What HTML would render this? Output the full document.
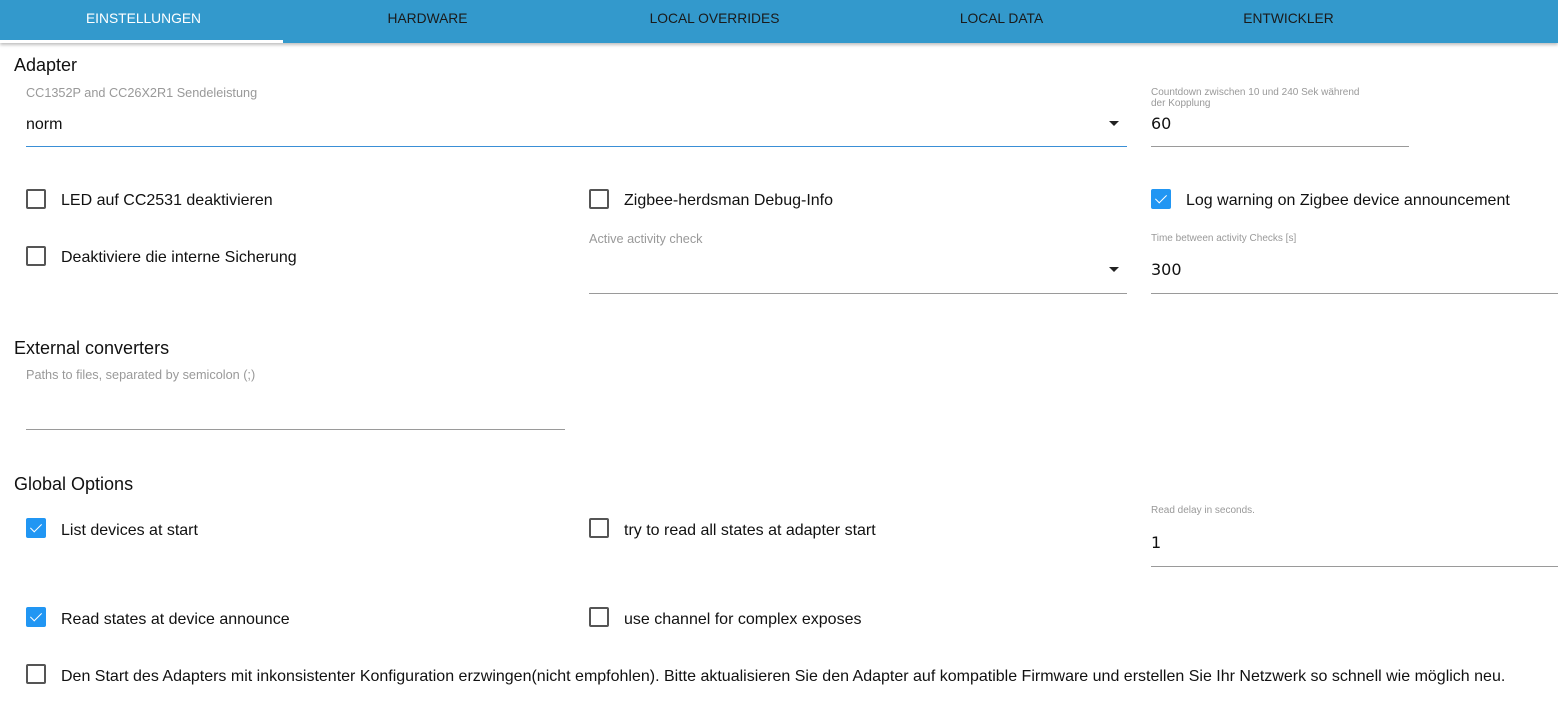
<!DOCTYPE html>
<html><head><meta charset="utf-8"><style>
*{margin:0;padding:0;box-sizing:border-box}
body{width:1558px;height:721px;position:relative;background:#fff;font-family:"Liberation Sans",sans-serif;color:#111;overflow:hidden}
.bar{position:absolute;left:0;top:0;width:1558px;height:43px;background:#3399cc;box-shadow:0 2px 3px rgba(0,0,0,.25)}
.tab{position:absolute;top:0;height:40px;line-height:38px;width:287px;text-align:center;font-size:13.8px;color:#1a1a1a}
.ind{position:absolute;left:0;top:40px;width:283px;height:3px;background:#fff}
.a{position:absolute;white-space:nowrap}
.h{font-size:18px;color:#111}
.lbl{font-size:12.7px;color:#999}
.sm{font-size:10px;color:#999;line-height:11px}
.t{font-size:16px;color:#111}
.v{font-size:16px;font-family:"DejaVu Sans",sans-serif;color:#111}
.ln{position:absolute;height:1px;background:#9a9a9a}
.cb{position:absolute;width:20px;height:20px;border:2px solid #555;border-radius:2px}
.cc{position:absolute;width:20px;height:20px;background:#2196f3;border-radius:2px}
.cc:after{content:"";position:absolute;left:7px;top:3px;width:5px;height:10px;border:solid #fff;border-width:0 1.6px 1.6px 0;transform:rotate(45deg)}
.arr{position:absolute;width:0;height:0;border-left:5px solid transparent;border-right:5px solid transparent;border-top:5px solid #222}
</style></head><body>
<div class="bar">
<div class="tab" style="left:0;color:#fff">EINSTELLUNGEN</div>
<div class="tab" style="left:284px">HARDWARE</div>
<div class="tab" style="left:571px">LOCAL OVERRIDES</div>
<div class="tab" style="left:858px">LOCAL DATA</div>
<div class="tab" style="left:1145px">ENTWICKLER</div>
<div class="ind"></div>
</div>

<div class="a h" style="left:14px;top:55px">Adapter</div>
<div class="a lbl" style="left:26px;top:86px">CC1352P and CC26X2R1 Sendeleistung</div>
<div class="a t" style="left:26px;top:116px">norm</div>
<div class="arr" style="left:1109px;top:121px"></div>
<div class="ln" style="left:26px;top:146px;width:1101px;background:#3a8fd6"></div>

<div class="a sm" style="left:1151px;top:87px">Countdown zwischen 10 und 240 Sek während<br>der Kopplung</div>
<div class="a v" style="left:1151px;top:114px">60</div>
<div class="ln" style="left:1151px;top:146px;width:258px"></div>

<div class="cb" style="left:26px;top:189px"></div>
<div class="a t" style="left:61px;top:192px">LED auf CC2531 deaktivieren</div>
<div class="cb" style="left:589px;top:189px"></div>
<div class="a t" style="left:624px;top:192px">Zigbee-herdsman Debug-Info</div>
<div class="cc" style="left:1151px;top:189px"></div>
<div class="a t" style="left:1186px;top:192px">Log warning on Zigbee device announcement</div>

<div class="cb" style="left:26px;top:246px"></div>
<div class="a t" style="left:61px;top:249px">Deaktiviere die interne Sicherung</div>
<div class="a lbl" style="left:589px;top:232px">Active activity check</div>
<div class="arr" style="left:1109px;top:267px"></div>
<div class="ln" style="left:589px;top:293px;width:538px"></div>
<div class="a sm" style="left:1151px;top:233px">Time between activity Checks [s]</div>
<div class="a v" style="left:1151px;top:260px">300</div>
<div class="ln" style="left:1151px;top:293px;width:407px"></div>

<div class="a h" style="left:14px;top:338px">External converters</div>
<div class="a lbl" style="left:26px;top:368px">Paths to files, separated by semicolon (;)</div>
<div class="ln" style="left:26px;top:429px;width:539px"></div>

<div class="a h" style="left:14px;top:474px">Global Options</div>
<div class="cc" style="left:26px;top:518px"></div>
<div class="a t" style="left:61px;top:522px">List devices at start</div>
<div class="cb" style="left:589px;top:518px"></div>
<div class="a t" style="left:624px;top:522px">try to read all states at adapter start</div>
<div class="a sm" style="left:1151px;top:505px">Read delay in seconds.</div>
<div class="a v" style="left:1151px;top:533px">1</div>
<div class="ln" style="left:1151px;top:566px;width:407px"></div>

<div class="cc" style="left:26px;top:607px"></div>
<div class="a t" style="left:61px;top:611px">Read states at device announce</div>
<div class="cb" style="left:589px;top:607px"></div>
<div class="a t" style="left:624px;top:611px">use channel for complex exposes</div>

<div class="cb" style="left:26px;top:664px"></div>
<div class="a t" style="left:61px;top:668px">Den Start des Adapters mit inkonsistenter Konfiguration erzwingen(nicht empfohlen). Bitte aktualisieren Sie den Adapter auf kompatible Firmware und erstellen Sie Ihr Netzwerk so schnell wie möglich neu.</div>
</body></html>
